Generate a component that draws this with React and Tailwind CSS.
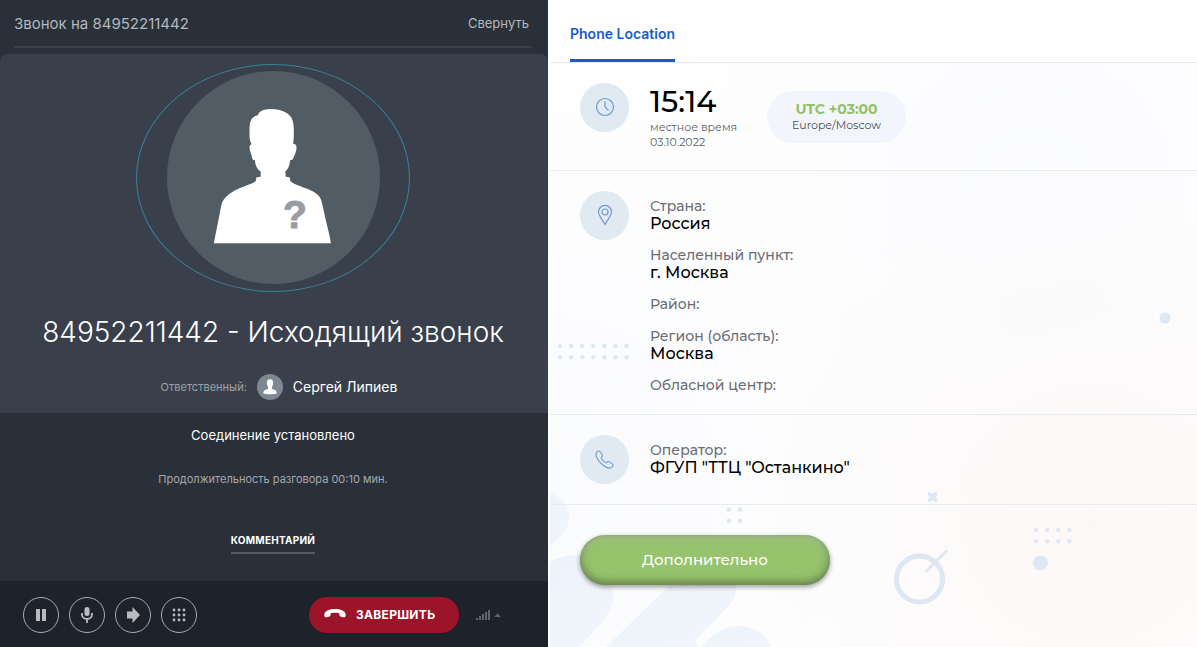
import clsx from 'clsx';

const placeFields = [
  { label: 'Страна:', value: 'Россия' },
  { label: 'Населенный пункт:', value: 'г. Москва' },
  { label: 'Район:', value: '' },
  { label: 'Регион (область):', value: 'Москва' },
  { label: 'Обласной центр:', value: '' },
];

function CallerAvatar() {
  return (
    <div className="flex h-[228px] w-[274px] justify-center rounded-[50%] border border-[#3a8199] pt-1.5">
      <svg viewBox="0 0 213 213" className="size-[213px]" role="img" aria-label="Неизвестный абонент">
        <circle cx="106.5" cy="106.5" r="106.5" fill="#525c65" />
        <path
          fill="#fff"
          d="M46.8 172.3 L54.5 133.5 C56 126 66 120 73 117 C80 114 88 112 88.9 109.5 L89.5 106.3 L93.7 105.7 L93.7 100.5 C89.5 98 88 93 88 89.3 C86.5 89.3 85.3 88.7 85.1 87 C84.9 84 82.6 80 82.5 76.5 C82.4 74.5 83.4 73.6 84.6 73.3 C82.8 70.5 82.4 67 82.5 62.7 C82.5 57 82.4 54.5 83.4 50.7 C84.3 47.3 87 44.6 90.9 44.3 C91.8 40 97 38 104.9 38 C113.5 38 121.5 41.5 124.6 47 C127.2 52 126.9 60 126.8 65 C126.8 68 126.3 70 126.2 72.7 C128.6 72.8 129.7 74 129.5 77 C129.3 81 127.7 83.5 126.7 86.5 C126.3 88 125 89.3 123 89.3 C122.8 94 121.5 98 118.3 100.5 L118.7 105.7 L122.7 106.3 L123.3 110 C129 116 147 117 153 126.5 C155.5 131 157 142 159.5 152 C161 158 163.5 168 163.9 172.3 Z"
        />
        <text
          x="128"
          y="157"
          textAnchor="middle"
          fill="#999ca3"
          stroke="#999ca3"
          className="font-['Liberation_Sans',sans-serif] text-[39px] font-bold"
        >
          ?
        </text>
      </svg>
    </div>
  );
}

function UserBadge() {
  return (
    <svg viewBox="0 0 26 26" className="size-[26px]" aria-hidden="true">
      <circle cx="13" cy="13" r="13" fill="#7e8893" />
      <path
        fill="#fff"
        d="M6.3 19.6 C6.3 16.7 7.4 16 10.6 14.9 C11.4 14.6 11.4 13.4 10.9 12.7 C10 11.3 9.9 10 9.9 8.6 C9.9 6.4 11.1 5.2 13 5.2 C14.9 5.2 16.1 6.4 16.1 8.6 C16.1 10 16 11.3 15.1 12.7 C14.6 13.4 14.6 14.6 15.4 14.9 C18.6 16 19.8 16.7 19.8 19.6 C17.7 20.6 8.4 20.6 6.3 19.6 Z"
      />
    </svg>
  );
}

function RoundButton({ label, children }) {
  return (
    <button
      type="button"
      aria-label={label}
      className="flex size-9 items-center justify-center rounded-full border border-[#a9abaf] text-[#b9bbbe]"
    >
      {children}
    </button>
  );
}

function CallControls() {
  return (
    <div className="flex h-[66px] items-center bg-[#1e222b] pt-0.5 pl-[23px]">
      <div className="flex gap-2.5">
        <RoundButton label="Удержать">
          <svg viewBox="0 0 10 12" className="h-3 w-2.5" fill="currentColor">
            <path d="M0 0h4v12H0zM6 0h4v12H6z" />
          </svg>
        </RoundButton>
        <RoundButton label="Микрофон">
          <svg viewBox="0 0 12 16" className="h-4 w-3">
            <rect x="3.5" y="0" width="5" height="9" rx="2.5" fill="currentColor" />
            <path d="M1 6v1.5a5 4.5 0 0 0 10 0V6M6 12v4" fill="none" stroke="currentColor" strokeWidth="1.8" />
          </svg>
        </RoundButton>
        <RoundButton label="Перевести">
          <svg viewBox="0 0 13 16" className="h-4 w-[13px]" fill="currentColor">
            <path d="M0 4.5h5.5V0L13 8l-7.5 8v-4.5H0z" />
          </svg>
        </RoundButton>
        <RoundButton label="Клавиатура">
          <svg viewBox="0 0 14 14" className="size-3.5" fill="currentColor">
            {[2, 7, 12].map((y) => [2, 7, 12].map((x) => <circle key={`${x}-${y}`} cx={x} cy={y} r="1.4" />))}
          </svg>
        </RoundButton>
      </div>
      <button
        type="button"
        className="ml-28 flex h-9 w-[150px] items-center gap-2.5 rounded-full bg-[#9b1427] pl-[15px] text-xs font-bold tracking-wide text-white"
      >
        <svg viewBox="0 0 22 9" className="mb-1 h-[9px] w-[22px]" fill="currentColor" aria-hidden="true">
          <path d="M11 0C5.5 0 1.5 2 .6 4.2C.1 5.6.2 7.2 1 8C1.9 8.8 5.5 7.8 6.2 7C6.9 6.2 6.2 4.8 7 4.3C8.4 3.6 13.6 3.6 15 4.3C15.8 4.8 15.1 6.2 15.8 7C16.5 7.8 20.1 8.8 21 8C21.8 7.2 21.9 5.6 21.4 4.2C20.5 2 16.5 0 11 0Z" />
        </svg>
        ЗАВЕРШИТЬ
      </button>
      <button type="button" aria-label="Качество связи" className="ml-[17px] text-[#62656c]">
        <svg viewBox="0 0 25 10" className="h-2.5 w-[25px]" fill="currentColor">
          <path d="M0 8h2v2H0zM3 6h2v4H3zM6 4h2v6H6zM9 2h2v8H9zM12 0h2v10h-2zM18 7l3.5-3.5L25 7z" />
        </svg>
      </button>
    </div>
  );
}

function CallPanel() {
  return (
    <section className="flex w-[548px] shrink-0 flex-col bg-[#2a3039] font-[Inter,sans-serif] text-white">
      <header className="mr-4 ml-3.5 flex h-12 items-center justify-between border-b-2 border-[#3a414b] pt-0.5 pr-[3px] text-[#b4b7bb]">
        <h2 className="text-[15px]">Звонок на 84952211442</h2>
        <button type="button" className="text-[13px]">Свернуть</button>
      </header>

      <div className="mt-1.5 flex h-[359px] flex-col items-center rounded-t-lg bg-[#3a404b] pt-2.5 pr-0.5">
        <CallerAvatar />
        <h1 className="mt-5 text-[28px] leading-10 font-light">84952211442 - Исходящий звонок</h1>
        <div className="mt-[22px] flex items-center gap-2.5 pl-3">
          <span className="text-[11px] text-[#9da1a7]">Ответственный:</span>
          <UserBadge />
          <span className="text-sm">Сергей Липиев</span>
        </div>
      </div>

      <div className="flex flex-1 flex-col items-center pt-3 pr-0.5">
        <p className="text-[13px] leading-5">Соединение установлено</p>
        <p className="mt-6 text-[11px] leading-5 text-[#a5a8ad]">Продолжительность разговора 00:10 мин.</p>
        <button type="button" className="mt-[41px] border-b-2 border-[#555a64] pb-0.5 text-[10px] leading-5 font-bold tracking-wide">
          КОММЕНТАРИЙ
        </button>
      </div>

      <CallControls />
    </section>
  );
}

function Backdrop() {
  const dots = (x0, y0, cols, rows = 2) =>
    Array.from({ length: cols * rows }, (_, i) => (
      <circle key={`${x0}-${i}`} cx={x0 + (i % cols) * 11.1} cy={y0 + Math.floor(i / cols) * 11.3} r="2.2" />
    ));

  return (
    <svg
      viewBox="0 0 647 584"
      preserveAspectRatio="xMidYMax slice"
      className="absolute inset-0 h-full w-full"
      aria-hidden="true"
    >
      <defs>
        <radialGradient id="cool">
          <stop offset="0" stopColor="#fafbfe" />
          <stop offset="1" stopColor="#fafbfe" stopOpacity="0" />
        </radialGradient>
        <radialGradient id="warm">
          <stop offset="0" stopColor="#fcf8f7" />
          <stop offset="1" stopColor="#fcf8f7" stopOpacity="0" />
        </radialGradient>
        <linearGradient id="shade" x1="0" y1="0" x2="1" y2="1">
          <stop offset="0" stopColor="#edf3fb" />
          <stop offset="1" stopColor="#f2f6fb" />
        </linearGradient>
      </defs>
      <rect width="647" height="584" fill="#fefefe" />
      <circle cx="480" cy="130" r="330" fill="url(#cool)" />
      <circle cx="0" cy="420" r="380" fill="url(#cool)" />
      <circle cx="540" cy="460" r="360" fill="url(#warm)" />
      <g fill="url(#shade)">
        <path d="M0 431C12 433 19 443 19 455C19 468 9 474 0 483Z" />
        <path d="M0 499C10 493 20 492 30 492C50 494 63 512 63 532C63 550 50 562 29 584H0Z" />
        <path d="M56 584L128 514H186V525C186 535 182 540 174 548L145 577L148 584Z" />
        <path d="M152 584C162 570 175 563 190 563C207 564 217 574 222 584Z" />
      </g>
      <g fill="#dfe7f2">
        {dots(10, 283, 7)}
        {dots(179, 446.5, 2)}
        {dots(486, 467, 4)}
        <circle cx="615" cy="255" r="5.5" />
        <circle cx="490.5" cy="500" r="7.5" />
      </g>
      <g fill="none" stroke="#dfe7f2" strokeLinecap="round">
        <circle cx="369.5" cy="516" r="23" strokeWidth="5" />
        <path d="M376.5 508L396.5 488" strokeWidth="3" />
        <path d="M379.5 431l6 6m0-6l-6 6" strokeWidth="4" />
      </g>
    </svg>
  );
}

function InfoRow({ icon, className, children }) {
  return (
    <div className={clsx('flex gap-[21px] border-b border-[#e9ebed] pt-5 pl-[30px]', className)}>
      <span className="flex size-[49px] shrink-0 items-center justify-center rounded-full bg-[#e1eaf2] pb-px text-[#6f9bce]">
        {icon}
      </span>
      {children}
    </div>
  );
}

function Field({ label, value }) {
  return (
    <div>
      <dt className="text-sm leading-[17px] font-medium text-[#6c6e73]">{label}</dt>
      {value && <dd className="text-base leading-[17px] font-medium text-black">{value}</dd>}
    </div>
  );
}

function LocationPanel() {
  return (
    <section className="ml-0.5 flex min-w-0 flex-1 flex-col bg-white font-[Montserrat,Inter,sans-serif]">
      <nav className="flex h-[63px] border-b border-[#e8eaec] pl-5">
        <a href="#location" className="flex items-center border-b-[3px] border-[#1a5ccc] pt-2 font-[Inter,sans-serif] text-sm font-semibold text-[#1a5ccc]">
          Phone Location
        </a>
      </nav>

      <div className="relative flex-1">
        <Backdrop />
        <div className="relative">
          <InfoRow
            className="h-[108px]"
            icon={
              <svg viewBox="0 0 20 20" className="size-5" fill="none" stroke="currentColor" strokeWidth="1.2">
                <circle cx="10" cy="10" r="8.5" />
                <path d="M10 4.5V10l3.5 3.5" />
              </svg>
            }
          >
            <div className="w-[87px] text-[11px] leading-[15px] whitespace-nowrap text-[#5c5e63]">
              <p className="pt-px pb-px text-[30px] leading-[35px] font-medium text-black">15:14</p>
              <p>местное время</p>
              <p>03.10.2022</p>
            </div>
            <div className="mt-2 ml-[9px] flex h-[52px] w-[139px] flex-col items-center justify-center rounded-full bg-[#f2f6fc]">
              <p className="text-sm leading-4 font-bold text-[#94c168]">UTC +03:00</p>
              <p className="text-[11px] leading-4 text-[#4c4e53]">Europe/Moscow</p>
            </div>
          </InfoRow>

          <InfoRow
            className="pb-5"
            icon={
              <svg viewBox="0 0 16 22" className="h-[22px] w-4" fill="none" stroke="currentColor" strokeWidth="1.2">
                <path d="M8 20.5C5.5 16 1.5 11.5 1.5 7.8a6.5 6.5 0 0 1 13 0C14.5 11.5 10.5 16 8 20.5Z" />
                <circle cx="8" cy="8" r="3" />
              </svg>
            }
          >
            <dl className="flex flex-col gap-[15px] pt-[7px]">
              {placeFields.map((field) => (
                <Field key={field.label} {...field} />
              ))}
            </dl>
          </InfoRow>

          <InfoRow
            className="h-[90px]"
            icon={
              <svg viewBox="0 0 24 24" className="size-[19px]" fill="none" stroke="currentColor" strokeWidth="1.4">
                <path d="M2.5 2.5C4 .8 5.5.8 6.8 2.5L9 5.7C9.8 7 9.5 7.9 8.6 8.8C7.7 9.7 7.8 10.5 8.5 11.5C9.8 13.2 11 14.4 12.7 15.6C13.7 16.3 14.5 16.3 15.3 15.4C16.2 14.5 17.2 14.3 18.4 15L21.5 17.2C23.2 18.4 23.2 19.9 21.7 21.3C19.8 23.2 17.2 23.3 14.2 21.7C9.6 19.3 5 14.6 2.5 10C.8 6.8.7 4.6 2.5 2.5Z" />
              </svg>
            }
          >
            <dl className="pt-[7px]">
              <Field label="Оператор:" value={'ФГУП "ТТЦ "Останкино"'} />
            </dl>
          </InfoRow>

          <button
            type="button"
            className="mt-[30px] ml-[30px] h-[50px] w-[250px] rounded-full bg-[#96c36c] text-[15px] font-medium text-white shadow-[0_2px_5px_rgba(0,0,0,0.4),inset_0_-3px_9px_rgba(60,75,45,0.6),inset_0_3px_9px_rgba(190,190,190,0.5)]"
          >
            Дополнительно
          </button>
        </div>
      </div>
    </section>
  );
}

function App() {
  return (
    <main className="flex min-h-screen bg-white">
      <CallPanel />
      <LocationPanel />
    </main>
  );
}

export default App;
